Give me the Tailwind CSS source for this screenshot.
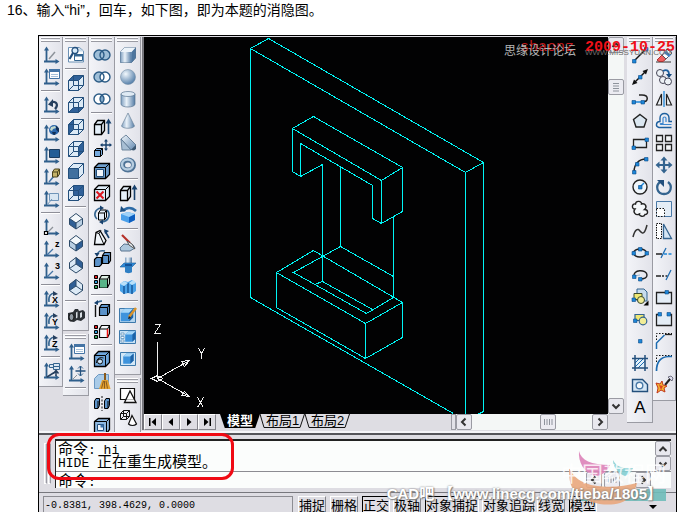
<!DOCTYPE html>
<html lang="zh-CN">
<head>
<meta charset="utf-8">
<meta name="viewport" content="width=device-width, initial-scale=1">
<title>CAD 消隐图</title>
<script src="https://cdn.jsdelivr.net/npm/@tailwindcss/browser@4"></script>
</head>
<body class="h-screen overflow-hidden bg-white font-['Liberation_Sans','Noto_Sans_CJK_SC',sans-serif] text-black">

<svg width="0" height="0" class="absolute" aria-hidden="true">
  <defs>
    <linearGradient id="gl" x1="0" x2="1" y1="0" y2="1"><stop offset="0" stop-color="#f4f9fd"/><stop offset="1" stop-color="#5f86ae"/></linearGradient>
    <linearGradient id="gh" x1="0" x2="1"><stop offset="0" stop-color="#7f9fc0"/><stop offset=".4" stop-color="#eaf2f9"/><stop offset="1" stop-color="#537ba5"/></linearGradient>
    <radialGradient id="gr" cx=".35" cy=".3" r=".75"><stop offset="0" stop-color="#f2f8fd"/><stop offset="1" stop-color="#4f7aa6"/></radialGradient>
    <g id="axes" fill="none" stroke="#2f5f8c" stroke-width="1.8"><path d="M5.5 4v12.5M3 16.500h13"/><path d="M5.500 1.500l-2.500 4h5zM18.500 16.500l-4-2.500v5z" fill="#2f5f8c" stroke="none"/></g>
    <g id="wire" fill="none" stroke="#234f7c" stroke-width="1"><path d="M2.500 7.500h10v10h-10zM7.500 2.500h10v10h-10zM2.500 7.500l5-5M12.500 7.500l5-5M2.500 17.500l5-5M12.500 17.500l5-5"/></g>
    <path id="hull" d="M2.500 7.500l5-5h10v10l-5 5h-10z" fill="#dceaf6"/>
    <g id="isow" fill="none" stroke="#2c4a68" stroke-width="1"><path d="M10 2.500l6.500 5v6L10 18l-6.500-4.500v-6zM3.500 7.500L10 12l6.500-4.500M10 12v6"/></g>
    <g id="bluebox"><path d="M4 7l4-4h9v9l-4 4H4z" fill="#3e93dc"/><path d="M4 7l4-4h9l-4 4z" fill="#a5d6f8"/><path d="M13 7l4-4v9l-4 4z" fill="#1d62a6"/></g>

    <symbol id="u1" viewBox="0 0 20 20"><use href="#axes"/><path d="M8 14l6-7" stroke="#8c9299" stroke-width="1.500"/></symbol>
    <symbol id="u2" viewBox="0 0 20 20"><use href="#axes"/><path d="M8.500 2.500h10v9h-10z" fill="#fff" stroke="#4474a5"/><path d="M8 2h11v3H8z" fill="#4474a5"/><path d="M10 7.500h7M10 9.500h7" stroke="#a7c1da"/></symbol>
    <symbol id="u3" viewBox="0 0 20 20"><use href="#axes"/><path d="M14 14c3.500-4 2-7.500-3-7" fill="none" stroke="#263f5e" stroke-width="2.200"/><path d="M7 9.500l5-5.500v8z" fill="#263f5e"/></symbol>
    <symbol id="u4" viewBox="0 0 20 20"><use href="#axes"/><circle cx="13" cy="7" r="5" fill="#2b66ab"/><path d="M10 4l4-1 1 2-3 1-1 2-2-1z" fill="#c3d9cb"/><path d="M15 2.500l3 3v4l-3-3zM11 9l4 0-1 3-2-.5z" fill="#122f55"/></symbol>
    <symbol id="u5" viewBox="0 0 20 20"><use href="#axes"/><path d="M8.500 4.500h10v8h-10z" fill="#235d96" stroke="#1a3c60"/></symbol>
    <symbol id="u6" viewBox="0 0 20 20"><use href="#axes"/><path d="M8 15l5-6" stroke="#4474a5" stroke-width="1.500"/><path d="M11.500 5l2-3h5v5l-2 3h-5z" fill="#c4b268" stroke="#4b431d"/><path d="M11.500 5h5v5M16.500 5l2-3" fill="none" stroke="#4b431d"/></symbol>
    <symbol id="u7" viewBox="0 0 20 20"><use href="#axes"/><path d="M8.500 4.500h9v7h-9z" fill="#d9e6f2" stroke="#6f94b8"/><path d="M6 16l5-6" stroke="#6f94b8"/></symbol>
    <symbol id="u8" viewBox="0 0 20 20"><use href="#axes"/><path d="M6 16l6-6" stroke="#8c9299" stroke-width="1.300"/><path d="M3.500 14.500h3v3h-3z" fill="#fff" stroke="#000" stroke-width="1.200"/></symbol>
    <symbol id="u9" viewBox="0 0 20 20"><use href="#axes"/><path d="M6 16l6-6" stroke="#4474a5" stroke-width="1.300"/><text x="14" y="8" font-family="Liberation Sans" font-weight="700" font-size="9">z</text></symbol>
    <symbol id="u10" viewBox="0 0 20 20"><use href="#axes"/><path d="M6 16l6-6" stroke="#4474a5" stroke-width="1.300"/><text x="14" y="8" font-family="Liberation Sans" font-weight="700" font-size="9">3</text></symbol>
    <symbol id="u11" viewBox="0 0 20 20"><use href="#axes"/><path d="M8 13c-1-6 2-9 6-9" fill="none" stroke="#34648f" stroke-width="1.500"/><path d="M17 5l-5-3v5z" fill="#263f5e"/><text x="11" y="14" font-family="Liberation Sans" font-weight="700" font-size="9">X</text></symbol>
    <symbol id="u12" viewBox="0 0 20 20"><use href="#axes"/><path d="M8 13c-1-6 2-9 6-9" fill="none" stroke="#34648f" stroke-width="1.500"/><path d="M17 5l-5-3v5z" fill="#263f5e"/><text x="11" y="14" font-family="Liberation Sans" font-weight="700" font-size="9">Y</text></symbol>
    <symbol id="u13" viewBox="0 0 20 20"><use href="#axes"/><path d="M8 13c-1-6 2-9 6-9" fill="none" stroke="#34648f" stroke-width="1.500"/><path d="M17 5l-5-3v5z" fill="#263f5e"/><text x="11" y="14" font-family="Liberation Sans" font-weight="700" font-size="9">Z</text></symbol>
    <symbol id="u14" viewBox="0 0 20 20"><use href="#axes"/><path d="M8.500 3.500h4v3h-4zM12.500 2.500h6v3h-6zM12.500 5.500h6v3h-6z" fill="#d9e6f2" stroke="#34648f"/><path d="M6 16l8-5M15 15v-5M12.500 12.500l2.500-3 2.500 3" fill="none" stroke="#263f5e" stroke-width="1.500"/></symbol>

    <symbol id="v1" viewBox="0 0 20 20"><path d="M2.500 2.500h11l4 3.500v11h-15z" fill="#fff" stroke="#6b91b5"/><path d="M13 2.500v4h4.500z" fill="#c9dcec"/><circle cx="9" cy="5.500" r="3" fill="#d9ecfa" stroke="#234f7c" stroke-width="1.300"/><path d="M7 8L3.500 14" stroke="#234f7c" stroke-width="2.200"/><path d="M8.500 9.500h8v6h-8z" fill="#fff" stroke="#34648f"/><path d="M8 9h9v2.500H8z" fill="#34648f"/></symbol>
    <symbol id="v2" viewBox="0 0 20 20"><use href="#hull"/><path d="M2.500 7.500l5-5h10l-5 5z" fill="#2f6099"/><use href="#wire"/></symbol>
    <symbol id="v3" viewBox="0 0 20 20"><use href="#hull"/><path d="M2.500 17.500l5-5h10l-5 5z" fill="#2f6099"/><use href="#wire"/></symbol>
    <symbol id="v4" viewBox="0 0 20 20"><use href="#hull"/><path d="M2.500 7.500l5-5v10l-5 5z" fill="#2f6099"/><use href="#wire"/></symbol>
    <symbol id="v5" viewBox="0 0 20 20"><use href="#hull"/><path d="M12.500 7.500l5-5v10l-5 5z" fill="#2f6099"/><use href="#wire"/></symbol>
    <symbol id="v6" viewBox="0 0 20 20"><use href="#hull"/><path d="M2.500 7.500h10v10h-10z" fill="#41709f"/><path d="M2.500 7.500l5-5h10v10l-5 5v-10zM2.500 7.500v10h10M12.500 7.500l5-5" fill="none" stroke="#234f7c"/></symbol>
    <symbol id="v7" viewBox="0 0 20 20"><use href="#hull"/><path d="M7.500 2.500h10v10h-10z" fill="#2f6099"/><use href="#wire"/></symbol>
    <symbol id="v8" viewBox="0 0 20 20"><path d="M10 2.500l6.500 5v6L10 18l-6.500-4.500v-6z" fill="#f4f8fb"/><path d="M3.500 7.500L10 12v6l-6.500-4.500z" fill="#2f5f96"/><path d="M16.500 7.500L10 12v6l6.500-4.500z" fill="#b9cfe3"/><use href="#isow"/></symbol>
    <symbol id="v9" viewBox="0 0 20 20"><path d="M10 2.500l6.500 5v6L10 18l-6.500-4.500v-6z" fill="#f4f8fb"/><path d="M3.500 7.500L10 12v6l-6.500-4.500z" fill="#b9cfe3"/><path d="M16.500 7.500L10 12v6l6.500-4.500z" fill="#2f5f96"/><use href="#isow"/></symbol>
    <symbol id="v10" viewBox="0 0 20 20"><path d="M10 2.500l6.500 5v6L10 18l-6.500-4.500v-6z" fill="#dceaf6"/><path d="M10 2.500l6.500 5v6L10 9z" fill="#2f5f96"/><path d="M10 2.500l6.500 5v6L10 18l-6.500-4.500v-6zM10 2.500V9M3.500 13.500L10 9l6.500 4.500" fill="none" stroke="#2c4a68"/></symbol>
    <symbol id="v11" viewBox="0 0 20 20"><path d="M10 2.500l6.500 5v6L10 18l-6.500-4.500v-6z" fill="#dceaf6"/><path d="M10 2.500l-6.500 5v6L10 9z" fill="#2f5f96"/><path d="M10 2.500l6.500 5v6L10 18l-6.500-4.500v-6zM10 2.500V9M3.500 13.500L10 9l6.500 4.500" fill="none" stroke="#2c4a68"/></symbol>
    <symbol id="v12" viewBox="0 0 20 20"><path d="M2 8l5-1 2-3h3l1 2 4-1 2 2v6l-4 3-4-1-3 2-4-.5-2-2z" fill="#2c3136"/><ellipse cx="5.500" cy="12" rx="2.500" ry="3.500" fill="#8f99a2" stroke="#111"/><path d="M10 7.500l1.500-1v6l-1.500 1zM14 8l2-1v5l-2 1z" fill="#d7dde2"/></symbol>
    <symbol id="v13" viewBox="0 0 20 20"><use href="#axes"/><path d="M14.500 2v10M9.500 7h10" fill="none" stroke="#234f7c" stroke-width="1.300"/><path d="M12 4.500L14.500 2 17 4.500M12 9.500l2.500 2.500L17 9.500" fill="none" stroke="#34648f"/><path d="M6 16l5-5" stroke="#8c9299"/></symbol>

    <symbol id="s1" viewBox="0 0 20 20"><circle cx="7" cy="10" r="5" fill="#9fbfd8"/><circle cx="13" cy="10" r="5" fill="#9fbfd8"/><g fill="none" stroke="#2c5c86" stroke-width="1.400"><circle cx="7" cy="10" r="5"/><circle cx="13" cy="10" r="5"/></g></symbol>
    <symbol id="s2" viewBox="0 0 20 20"><circle cx="7" cy="10" r="5" fill="#9fbfd8"/><circle cx="13" cy="10" r="5" fill="#fff"/><g fill="none" stroke="#2c5c86" stroke-width="1.400"><circle cx="7" cy="10" r="5"/><circle cx="13" cy="10" r="5"/></g></symbol>
    <symbol id="s3" viewBox="0 0 20 20"><circle cx="7" cy="10" r="5" fill="#fff"/><circle cx="13" cy="10" r="5" fill="#fff"/><path d="M10 6a5 5 0 010 8 5 5 0 010-8z" fill="#7fa7c8"/><g fill="none" stroke="#2c5c86" stroke-width="1.400"><circle cx="7" cy="10" r="5"/><circle cx="13" cy="10" r="5"/></g></symbol>
    <symbol id="s4" viewBox="0 0 20 20"><path d="M2.500 7.500l3-4h7v10l-3 4h-7z" fill="#e4eff9" stroke="#000" stroke-width="1.300"/><path d="M2.500 7.500h7l3-4M9.500 7.500v10" fill="none" stroke="#000" stroke-width="1.300"/><path d="M16.500 17V5" stroke="#17406c" stroke-width="1.600"/><path d="M16.500 1.500L13.500 6.500h6z" fill="#17406c"/></symbol>
    <symbol id="s5" viewBox="0 0 20 20"><path d="M2.500 11.500l2-2h6v6l-2 2h-6z" fill="#76a9dc" stroke="#000"/><path d="M2.500 11.500h6v6M8.500 11.500l2-2" fill="none" stroke="#000"/><path d="M14 1.500v9M9.500 6h9" stroke="#17406c" stroke-width="1.400"/><path d="M14 0l-2 2.500h4zM14 12l-2-2.500h4zM8 6l2.500-2v4zM20 6l-2.500-2v4z" fill="#17406c"/></symbol>
    <symbol id="s6" viewBox="0 0 20 20"><path d="M2.500 6.500l4-4h11v11l-4 4h-11z" fill="#6f9fce" stroke="#000" stroke-width="1.300"/><path d="M4.500 8.500h7v7h-7z" fill="#f1f6fb" stroke="#234f7c"/><path d="M13.500 6.500l4-4M13.500 6.500v11M2.500 6.500h11" fill="none" stroke="#000"/></symbol>
    <symbol id="s7" viewBox="0 0 20 20"><path d="M2.500 6.500l4-4h11v11l-4 4h-11z" fill="#dcebf7" stroke="#000" stroke-width="1.300"/><path d="M13.500 6.500l4-4M13.500 6.500v11M2.500 6.500h11" fill="none" stroke="#000"/><path d="M4.500 8.500l7 7M11.500 8.500l-7 7" stroke="#dd1720" stroke-width="2"/></symbol>
    <symbol id="s8" viewBox="0 0 20 20"><path d="M6.500 8l2-3h6v7l-2 3h-6z" fill="#e4eff9" stroke="#000"/><path d="M6.500 8h6v7M12.500 8l2-3" fill="none" stroke="#000"/><path d="M5 14c-4-4-2-10 4-11M15 5c4 4 2 11-5 12" fill="none" stroke="#34648f" stroke-width="1.700"/><path d="M12 3L8 .5v5zM7 17l4-2.500v5z" fill="#17406c"/></symbol>
    <symbol id="s9" viewBox="0 0 20 20"><path d="M2.500 17.500L4 5.500l4-2 6 10-2 4z" fill="#f1f6fb" stroke="#000" stroke-width="1.300"/><path d="M4 5.500l3 1 5 11M7 6.500l2-3" fill="none" stroke="#000"/><path d="M17 11l-4-7" stroke="#17406c" stroke-width="1.600"/><path d="M12 2l5 2-4 3z" fill="#17406c"/></symbol>
    <symbol id="s10" viewBox="0 0 20 20"><path d="M2.500 10.500l2-2h5v7l-2 2h-5z" fill="#5c93ca" stroke="#000" stroke-width="1.200"/><path d="M10.500 6.500l2-3h6v8l-2 3h-6z" fill="#5c93ca" stroke="#000" stroke-width="1.200"/><path d="M10.500 6.500h6v8" fill="none" stroke="#000"/><path d="M5 6c1-4 4-5 8-4" fill="none" stroke="#34648f" stroke-width="1.500"/><path d="M2.500 4h5L5 8z" fill="#17406c"/></symbol>
    <symbol id="s11" viewBox="0 0 20 20"><path d="M7.500 8l2-3.500h8v8l-2 4h-8z" fill="#dff1e6" stroke="#000" stroke-width="1.200"/><path d="M8 8.500h7v8H8z" fill="#58b488"/><path d="M7.500 8h8v8M15.500 8l2-3.500" fill="none" stroke="#000"/><path d="M2.500 4.500h3v3h-3z" fill="#d22" stroke="#000"/><path d="M2.500 9.500h3v3h-3z" fill="#2a9ad6" stroke="#000"/><path d="M2.500 14.500h3v3h-3z" fill="#3aa35a" stroke="#000"/></symbol>
    <symbol id="s12" viewBox="0 0 20 20"><path d="M7.500 8.500l2-3h8v8l-2 3h-8z" fill="#5c93ca" stroke="#000" stroke-width="1.200"/><path d="M7.500 8.500h8v8M15.500 8.500l2-3" fill="none" stroke="#000"/><path d="M3.500 6v12" stroke="#111" stroke-width="1.400"/><path d="M4 5c2-3 4-3 6-3" fill="none" stroke="#34648f" stroke-width="1.500"/><path d="M2 4l4-3v5z" fill="#17406c"/></symbol>
    <symbol id="s13" viewBox="0 0 20 20"><path d="M7.500 8l2-3.500h8v8l-2 4h-8z" fill="#f6f9fc" stroke="#000" stroke-width="1.200"/><path d="M7.500 8h8M15.500 8l2-3.500" fill="none" stroke="#000"/><path d="M15.500 8v8.500" stroke="#e11" stroke-width="1.500"/><path d="M2.500 4.500h3v3h-3z" fill="#d22" stroke="#000"/><path d="M2.500 9.500h3v3h-3z" fill="#2a9ad6" stroke="#000"/><path d="M2.500 14.500h3v3h-3z" fill="#3aa35a" stroke="#000"/></symbol>
    <symbol id="s14" viewBox="0 0 20 20"><path d="M2.500 6.500l4-4h11v11l-4 4h-11z" fill="#6ea5d9" stroke="#000" stroke-width="1.300"/><path d="M13.500 6.500l4-4M13.500 6.500v11M2.500 6.500h11" fill="none" stroke="#000"/><circle cx="8" cy="12.500" r="2.500" fill="#c8e0f4" stroke="#111"/><path d="M4.500 14c0-5 4-6 7-5" fill="none" stroke="#111"/></symbol>
    <symbol id="s15" viewBox="0 0 20 20"><path d="M2.500 7.500l4-4h10v9l-4 5h-10z" fill="#a9cbe8" stroke="#6c98c2"/><path d="M12 2h2v7h-2z" fill="#8a5a1c"/><path d="M10 9h6l2.500 9H7z" fill="#e2a132"/><path d="M9.500 17.500L11.500 10M12.500 17.500V10M15.500 17.500L14 10" stroke="#8a5a1c"/></symbol>
    <symbol id="s16" viewBox="0 0 20 20"><path d="M2.500 8l1.500-2.500h3.500v7L6 15.500H2.500zM12.500 8L14 5.500h3.500v7L16 15.500h-3.500z" fill="#5c93ca" stroke="#000"/><path d="M6 8v7M16 8v7" stroke="#000"/><path d="M10 3v15" stroke="#111" stroke-dasharray="2 1.500"/></symbol>
    <symbol id="s17" viewBox="0 0 20 20"><path d="M2.500 6.500l4-3h11v11l-3 4h-12z" fill="#8fb9e0" stroke="#000" stroke-width="1.300"/><path d="M2.500 6.500h12v12M14.500 6.500l3-3" fill="none" stroke="#000"/><path d="M5.500 9.500h6v6h-6z" fill="#eef5fb" stroke="#234f7c"/><path d="M8.500 9.500h3v3h-3z" fill="#3c72a8"/></symbol>

    <symbol id="d1" viewBox="0 0 20 20"><path d="M2.500 7l4-4.500h11V13l-4 4.500h-11z" fill="url(#gl)" stroke="#5a7590"/><path d="M13.500 7l4-4.500V13l-4 4.500z" fill="#4d769f"/><path d="M2.500 7h11v10.500h-11z" fill="url(#gh)"/><path d="M2.500 7l4-4.500h11L13.500 7z" fill="#edf4fa"/></symbol>
    <symbol id="d2" viewBox="0 0 20 20"><circle cx="10" cy="10" r="7.500" fill="url(#gr)" stroke="#7790a8" stroke-width=".6"/></symbol>
    <symbol id="d3" viewBox="0 0 20 20"><path d="M3 5v10c0 4 14 4 14 0V5z" fill="url(#gh)" stroke="#5a7590" stroke-width=".7"/><ellipse cx="10" cy="5" rx="7" ry="2.500" fill="#dfeaf4" stroke="#5a7590" stroke-width=".7"/></symbol>
    <symbol id="d4" viewBox="0 0 20 20"><path d="M10 2l6.500 13c-1 3-12 3-13 0z" fill="url(#gh)" stroke="#6a8299" stroke-width=".7"/></symbol>
    <symbol id="d5" viewBox="0 0 20 20"><path d="M3 6l5-4 10 10-5 5z" fill="url(#gl)" stroke="#56718c" stroke-width=".8"/><path d="M3 6l10 11H4z" fill="#a8bfd4" stroke="#56718c" stroke-width=".8"/><path d="M13 17l5-5v4l-2 1.500z" fill="#3c5873"/></symbol>
    <symbol id="d6" viewBox="0 0 20 20"><ellipse cx="10" cy="10" rx="5.500" ry="5" fill="none" stroke="#4f7396" stroke-width="5"/><ellipse cx="9.500" cy="9.500" rx="5.500" ry="5" fill="none" stroke="#b7cde0" stroke-width="2.500"/></symbol>
    <symbol id="d7" viewBox="0 0 20 20"><path d="M3 9l7-2 7 2v6l-6 3-8-3z" fill="#4ba0ea"/><path d="M11 12l6-3v6l-6 3z" fill="#0f5fc0"/><path d="M3 9l7-2 7 2-6 3z" fill="#9fd2f9"/><path d="M5 6c3-4 9-4 13 0" fill="none" stroke="#2d6ba6" stroke-width="2.500"/><path d="M2 7l1-6 5 5z" fill="#1b4d80"/></symbol>
    <symbol id="d8" viewBox="0 0 20 20"><path d="M2 15l4-4 9 1 2 3-5 3H3z" fill="#aec8dd" stroke="#5a7590"/><path d="M4 2l8 8" stroke="#b5302a" stroke-width="2.200"/><path d="M9 8l5 3 3 5-6-4z" fill="#e9eef2" stroke="#555"/></symbol>
    <symbol id="d9" viewBox="0 0 20 20"><path d="M7 2.500h7v6H7z" fill="url(#gh)"/><path d="M2 12l4-4h12l-4 4z" fill="#2f8ad8" stroke="#1c5a94" stroke-width=".6"/><path d="M7 12h7v5c-1 1.500-6 1.500-7 0z" fill="#2f7fc4"/><path d="M7 9h7v2H7z" fill="#155297"/></symbol>
    <symbol id="d10" viewBox="0 0 20 20"><path d="M2 7l4-3 4 1 4-2 4 3v8l-4 3-4-1-4 1-4-3z" fill="#4aa2e8"/><path d="M6 9v8M10 6v10M14 8v9" stroke="#17599c" stroke-width="1.500"/><path d="M2 7l4-3 4 2-4 3zM11 6l4-3 3 3-4 2z" fill="#b9e0fa"/></symbol>
    <symbol id="d11" viewBox="0 0 20 20"><path d="M1.500 3.500h16v14h-16z" fill="#b5d5ee" stroke="#3d79ab"/><g transform="translate(-1 1) scale(.95)"><use href="#bluebox"/></g><path d="M18 3l-7 9" stroke="#d9932b" stroke-width="2.500"/><path d="M11 11l-1 3 3-1z" fill="#222"/></symbol>
    <symbol id="d12" viewBox="0 0 20 20"><path d="M1.500 3.500h16v13h-16z" fill="#c9e2f5" stroke="#3d79ab"/><path d="M3 6h3v2H3zM3 9.500h3v2H3zM3 13h3v2H3z" fill="#fff" stroke="#3d79ab" stroke-width=".6"/><g transform="translate(4 2) scale(.8)"><use href="#bluebox"/></g></symbol>
    <symbol id="d13" viewBox="0 0 20 20"><path d="M2.500 3.500h15v13h-15z" fill="#d3e7f6" stroke="#3d79ab"/><g transform="translate(2 2) scale(.8)"><use href="#bluebox"/></g></symbol>
    <symbol id="d14" viewBox="0 0 20 20"><path d="M2.500 2.500h14v11h-14z" fill="#fff" stroke="#111" stroke-width="1.200"/><path d="M6.500 16.500L12 5l6 11.500z" fill="#fff" fill-opacity=".7" stroke="#111" stroke-width="1.300"/></symbol>
    <symbol id="d15" viewBox="0 0 20 20"><path d="M2.500 5.500l3-3h6v6l-3 3h-6zM2.500 5.500h6v6M8.500 5.500l3-3M5.500 2.500v6h6M2.500 11.500l3-3" fill="none" stroke="#111"/><path d="M14 7.500l4.500 8.500c-2 2-6 2-8 0z" fill="#fff" stroke="#111" stroke-width="1.200"/></symbol>

    <g id="dot"><path d="M-1.500-1.500h3.500v3.500h-3.500z" fill="#1d86d8" stroke="#0c4a86" stroke-width=".6"/></g>
    <symbol id="l1" viewBox="0 0 20 20"><path d="M4 16L16 4" stroke="#111" stroke-width="1.500"/><use href="#dot" x="4" y="16"/><use href="#dot" x="16" y="4"/></symbol>
    <symbol id="l2" viewBox="0 0 20 20"><path d="M3.500 16.500l13-13" stroke="#111" stroke-width="1.400"/><path d="M2 18l2-5.500L7.500 16zM18 2l-2 5.500L12.500 4z" fill="#111"/><use href="#dot" x="10" y="10"/></symbol>
    <symbol id="l3" viewBox="0 0 20 20"><path d="M3 13h9" stroke="#1d86d8" stroke-width="1.500"/><path d="M12 13c7 0 7-7 0-7H9" fill="none" stroke="#222" stroke-width="1.500"/><use href="#dot" x="3.500" y="13"/><use href="#dot" x="12.500" y="13"/></symbol>
    <symbol id="l4" viewBox="0 0 20 20"><path d="M10 3.500l6.500 5-2.500 7.500H6L3.500 8.500z" fill="#dbe7f1" stroke="#222" stroke-width="1.400"/></symbol>
    <symbol id="l5" viewBox="0 0 20 20"><path d="M3.500 6.500h13v8h-13z" fill="#e4edf6" stroke="#222" stroke-width="1.300"/><use href="#dot" x="3.500" y="14.500"/><use href="#dot" x="16.500" y="6.500"/></symbol>
    <symbol id="l6" viewBox="0 0 20 20"><path d="M4 17C4 9 9 4 16 4" fill="none" stroke="#222" stroke-width="1.500"/><use href="#dot" x="4" y="17"/><use href="#dot" x="7" y="9"/><use href="#dot" x="16" y="4"/></symbol>
    <symbol id="l7" viewBox="0 0 20 20"><circle cx="10" cy="10" r="7" fill="#eff5fa" stroke="#222" stroke-width="1.400"/><path d="M10 10l4-4" stroke="#1d86d8" stroke-width="1.500"/><use href="#dot" x="10" y="10"/></symbol>
    <symbol id="l8" viewBox="0 0 20 20"><path d="M5 10C1 10 2 4 5.500 5 6 1 12 2 11.500 5c4-1 6 3 3 5.500 4 0 4 5 .5 5-1 3-6 2-5.500-.5-4 2-7-2-4.500-5z" fill="#f4f7fa" stroke="#222" stroke-width="1.400"/></symbol>
    <symbol id="l9" viewBox="0 0 20 20"><path d="M3 16C5 8 8 7 10 10c3 4 5 2 7-6" fill="none" stroke="#333" stroke-width="1.500"/></symbol>
    <symbol id="l10" viewBox="0 0 20 20"><ellipse cx="10" cy="10" rx="6.500" ry="4" fill="#e4edf6" stroke="#222" stroke-width="1.400"/><use href="#dot" x="3.500" y="10"/><use href="#dot" x="16.500" y="10"/><use href="#dot" x="10" y="6"/></symbol>
    <symbol id="l11" viewBox="0 0 20 20"><path d="M4 12c-2-8 13-8 13-2 0 3-3 4-7 4" fill="none" stroke="#222" stroke-width="1.400"/><path d="M4 11l6-1" stroke="#9cb9d4"/><use href="#dot" x="4" y="11.500"/><use href="#dot" x="10" y="14"/></symbol>
    <symbol id="l12" viewBox="0 0 20 20"><path d="M7 2h7l3 3v9H7z" fill="#c7dcee" stroke="#34648f"/><path d="M4 6.500h8v6H4z" fill="#efe873" stroke="#3d4b2c"/><circle cx="11" cy="13" r="3.500" fill="#f1ed97" stroke="#3d4b2c"/><use href="#dot" x="3.500" y="12.500"/><path d="M18.500 13.500v5h-5z" fill="#000"/></symbol>
    <symbol id="l13" viewBox="0 0 20 20"><path d="M5 5.500h9v6H5z" fill="#efe873" stroke="#34648f" stroke-width="1.200"/><circle cx="13" cy="12" r="3.800" fill="#f1ed97" stroke="#34648f" stroke-width="1.200"/><use href="#dot" x="5" y="11.500"/></symbol>
    <symbol id="l14" viewBox="0 0 20 20"><use href="#dot" x="10" y="10"/></symbol>
    <symbol id="l15" viewBox="0 0 20 20"><path d="M5.500 5.500h9v9h-9z" fill="#e4f1fa"/><path d="M5 10l5-5M5 14l9-9M8 15l7-7" stroke="#1d6bb0"/><path d="M5 2v16M15 2v16M2 5.500h16M2 15h16" stroke="#234f7c" stroke-width="1.500"/></symbol>
    <symbol id="l16" viewBox="0 0 20 20"><path d="M2.500 4.500h10l5 5v7h-15z" fill="#d5e6f5" stroke="#234f7c" stroke-width="1.400"/><circle cx="9.500" cy="10.500" r="3.300" fill="#f5f9fc" stroke="#4a7aa8" stroke-width="1.400"/></symbol>
    <symbol id="l17" viewBox="0 0 20 20"><text x="10" y="16" text-anchor="middle" font-family="Liberation Sans" font-size="17">A</text></symbol>

    <symbol id="m1" viewBox="0 0 20 20"><path d="M2 17h15" stroke="#333"/><path d="M8 10l4 4-3 2.500H5L3 15z" fill="#ef5f5f" stroke="#a33"/><path d="M8 10l5-6 5 4-6 6z" fill="#fff" stroke="#556"/><path d="M10 8l5 4 2-2-5-4z" fill="#3c86cf"/></symbol>
    <symbol id="m2" viewBox="0 0 20 20"><circle cx="6" cy="6" r="3.500" fill="#edf2f6" stroke="#445"/><circle cx="9" cy="13" r="3.500" fill="#edf2f6" stroke="#445"/><circle cx="14" cy="14.500" r="3.500" fill="#edf2f6" stroke="#445"/><path d="M9 4c4-2 6 0 6 3" fill="none" stroke="#1d5f9e" stroke-width="1.800"/><path d="M12 7h6l-3 4z" fill="#174a7e"/></symbol>
    <symbol id="m3" viewBox="0 0 20 20"><path d="M10 2v16" stroke="#1d86d8" stroke-width="1.300"/><path d="M7.500 5v11H2.500zM12.500 5v11h5z" fill="#eef2f5" stroke="#222" stroke-width="1.200"/></symbol>
    <symbol id="m4" viewBox="0 0 20 20"><path d="M17.500 16.500H5c-4-1-3-6 1-6V7c0-6 9-6 9 0v3.500h3" fill="none" stroke="#1d5f9e" stroke-width="1.400"/><path d="M17.500 13.500H7c-1 0-1-1 0-1h2V7.500c0-2 3-2 3 0v3.500" fill="none" stroke="#3c86cf" stroke-width="1.200"/></symbol>
    <symbol id="m5" viewBox="0 0 20 20"><path d="M2.500 2.500h6v6h-6zM11.500 2.500h6v6h-6zM2.500 11.500h6v6h-6zM11.500 11.500h6v6h-6z" fill="#f4f6f8" stroke="#222" stroke-width="1.300"/></symbol>
    <symbol id="m6" viewBox="0 0 20 20"><path d="M10 4v12M4 10h12" stroke="#34648f" stroke-width="2.200"/><path d="M10 1.500L6.500 5.500h7zM10 18.500l-3.500-4h7zM1.500 10l4-3.500v7zM18.500 10l-4-3.500v7z" fill="#34648f"/></symbol>
    <symbol id="m7" viewBox="0 0 20 20"><path d="M6 5c-5 4-3 12 4 12s9-8 4-12" fill="none" stroke="#34648f" stroke-width="2.300"/><path d="M3 3h7v7z" fill="#234f7c"/></symbol>
    <symbol id="m8" viewBox="0 0 20 20"><path d="M2.500 2.500h15v15h-15z" fill="#e4edf6" stroke="#4a7aa8"/><path d="M2.500 9.500h8v8h-8z" fill="#fff" stroke="#111" stroke-dasharray="1.500 1.500"/></symbol>
    <symbol id="m9" viewBox="0 0 20 20"><path d="M2.500 2.500h5v15h-5z" fill="#fff" stroke="#111" stroke-dasharray="1.500 1"/><path d="M9.500 3l8 14.500h-8z" fill="#d5e6f5" stroke="#34648f" stroke-width="1.300"/></symbol>
    <symbol id="m10" viewBox="0 0 20 20"><path d="M2 11h6" stroke="#222" stroke-width="1.500"/><path d="M10 11h8" stroke="#1d86d8" stroke-dasharray="3 1.500" stroke-width="1.300"/><path d="M7 15l5-10" stroke="#1d6bb0" stroke-width="1.300"/></symbol>
    <symbol id="m11" viewBox="0 0 20 20"><path d="M2 11h5" stroke="#222" stroke-width="1.500"/><path d="M8 11h6" stroke="#222" stroke-dasharray="2 1.500" stroke-width="1.300"/><path d="M12 15l5-10" stroke="#1d6bb0" stroke-width="1.300"/></symbol>
    <symbol id="m12" viewBox="0 0 20 20"><path d="M2.500 5.500h15v11h-15z" fill="#e4edf6" stroke="#222" stroke-width="1.300"/><use href="#dot" x="12.500" y="5"/></symbol>
    <symbol id="m13" viewBox="0 0 20 20"><path d="M5 5.500H2.500v11h15v-11H15" fill="#e4edf6" stroke="#222" stroke-width="1.300"/><use href="#dot" x="5.500" y="5"/><use href="#dot" x="14.500" y="5"/></symbol>
    <symbol id="m14" viewBox="0 0 20 20"><path d="M2.500 9V2.500H18" fill="none" stroke="#111" stroke-dasharray="1.500 1.500"/><path d="M2.500 18v-6l8-8" fill="none" stroke="#1d6bb0" stroke-width="1.500"/><path d="M11 3.500h7" stroke="#222" stroke-width="1.300"/></symbol>
    <symbol id="m15" viewBox="0 0 20 20"><path d="M2.500 9V2.500H18" fill="none" stroke="#111" stroke-dasharray="1.500 1.500"/><path d="M2.500 18c0-9 4-14 12-14.500H18" fill="none" stroke="#1d6bb0" stroke-width="1.700"/></symbol>
    <symbol id="m16" viewBox="0 0 20 20"><path d="M11 10l5-6" stroke="#222" stroke-width="2"/><path d="M14 2l3-1 2 2-1 3-2-2z" fill="#dde" stroke="#445" stroke-width=".7"/><path d="M2 8l4 1 2-3 1 4 4 1-3 2 1 4-4-2-4 3 1-5z" fill="#f2b233" stroke="#c2371c"/><path d="M5 10l4 1-2 4z" fill="#d42"/></symbol>

    <symbol id="up" viewBox="0 0 14 14"><path d="M3.500 9L7 5.500 10.500 9" fill="none" stroke="#333" stroke-width="2"/></symbol>
    <symbol id="down" viewBox="0 0 14 14"><path d="M3.500 5.500L7 9l3.500-3.500" fill="none" stroke="#333" stroke-width="2"/></symbol>
    <symbol id="left" viewBox="0 0 14 14"><path d="M8.500 3.500L5 7l3.500 3.500" fill="none" stroke="#333" stroke-width="2"/></symbol>
    <symbol id="right" viewBox="0 0 14 14"><path d="M5.500 3.500L9 7l-3.500 3.500" fill="none" stroke="#333" stroke-width="2"/></symbol>
    <symbol id="grab" viewBox="0 0 14 14"><path d="M3.500 4v6M6 4v6M8.500 4v6M11 4v6" stroke="#8e939c"/></symbol>
  </defs>
</svg>

<p class="h-[35px] pl-[7px] pt-px text-[14px] leading-[18px]">16、输入“hi”，回车，如下图，即为本题的消隐图。</p>

<main class="relative ml-[38px] mr-[9px] border border-b-0 border-black bg-[#dedde3]">
  <div class="flex max-h-[396px] items-start overflow-hidden pt-px">
    <div class="flex w-6 flex-col" data-col="left1"></div>
    <div class="flex w-[26px] flex-col" data-col="left2"></div>
    <div class="flex w-[26px] flex-col" data-col="left3"></div>
    <div class="flex w-[26px] flex-col" data-col="left4"></div>

    <section class="ml-px flex min-w-0 flex-1 flex-col border-l-2 border-[#77777d]">
      <div class="flex">
        <div class="min-w-0 flex-1 overflow-hidden bg-[#020203]">
          <svg class="block h-[377px] w-[464px]" viewBox="144 37 464 377" role="img" aria-label="消隐后的三维模型">
            <g fill="none" stroke="#00f4f4" stroke-width="1" shape-rendering="crispEdges" transform="translate(.5 .5)">
              <path d="M453 413L250 297V48l18-10 215 124-18 10L250 48M465 172v242M483 162v249l-6 3"/>
              <path d="M292 128l21-12 89 51-21 13zM292 128v43l8 5v-33l72 42v33l9 5 21-12v-44M381 180v43M300 176l22-12v117M340 166v80M393 216v81"/>
              <path d="M393 276l-53-30-47 26 73 41 27-16M276 272l37-22 89 52-37 21zM276 272v35l89 51 37-21v-35M365 323v35M314 284l8-3 50 28"/>
            </g>
            <g fill="none" stroke="#f0f0f0" stroke-width="1" transform="translate(.5 .5)">
              <path d="M157 341v37l32-18M157 378l32 18M151 378l6-3 5 3-5 3zM189 360l-8 1 3 5zM189 396l-8-1 3-4zM154 324h6l-6 9h6M198 348l3 5 3-5M201 353v5M197 397l6 10M203 397l-6 10" shape-rendering="crispEdges"/>
            </g>
          </svg>
        </div>
        <div class="flex w-4 flex-col bg-[#f4f7f6]">
          <button type="button" aria-label="向上滚动" class="size-4 rounded-xs border border-[#9a9ba3] bg-[#e8e8ee]"><svg class="size-3.5"><use href="#up"/></svg></button>
          <button type="button" aria-label="垂直滚动块" class="mt-[26px] size-4 rounded-xs border border-[#9a9ba3] bg-[#ececf2]"><svg class="size-3.5 rotate-90"><use href="#grab"/></svg></button>
          <button type="button" aria-label="向下滚动" class="mt-auto size-4 rounded-xs border border-[#9a9ba3] bg-[#e8e8ee]"><svg class="size-3.5"><use href="#down"/></svg></button>
        </div>
      </div>
      <div class="flex h-4 items-stretch">
        <div class="flex">
          <button type="button" aria-label="第一个布局" class="flex w-[18px] items-center justify-center border border-white border-r-[#85858c] border-b-[#85858c]"><svg class="size-3" viewBox="0 0 12 12"><path d="M2 2h1.500v8H2zM9 2v8L4.500 6z"/></svg></button>
          <button type="button" aria-label="上一个布局" class="flex w-[18px] items-center justify-center border border-white border-r-[#85858c] border-b-[#85858c]"><svg class="size-3" viewBox="0 0 12 12"><path d="M8 2v8L3.500 6z"/></svg></button>
          <button type="button" aria-label="下一个布局" class="flex w-[18px] items-center justify-center border border-white border-r-[#85858c] border-b-[#85858c]"><svg class="size-3" viewBox="0 0 12 12"><path d="M4 2v8l4.500-4z"/></svg></button>
          <button type="button" aria-label="最后一个布局" class="flex w-[18px] items-center justify-center border border-white border-r-[#85858c] border-b-[#85858c]"><svg class="size-3" viewBox="0 0 12 12"><path d="M8.500 2H10v8H8.500zM3 2v8l4.500-4z"/></svg></button>
        </div>
        <div class="ml-1 flex" role="tablist">
          <button type="button" role="tab" aria-selected="true" class="h-[14px] w-10 bg-black text-[13px] leading-[14px] font-bold text-white [clip-path:polygon(0_0,100%_0,88%_100%,12%_100%)]">模型</button>
          <button type="button" role="tab" class="relative h-[14px] w-[45px] text-[13px] leading-[14px]"><svg class="absolute inset-0 h-[14px] w-[45px]" viewBox="0 0 45 14" fill="none" stroke="#111"><path d="M0 0l4 13.500h36L44.500 0"/></svg>布局1</button>
          <button type="button" role="tab" class="relative h-[14px] w-[45px] text-[13px] leading-[14px]"><svg class="absolute inset-0 h-[14px] w-[45px]" viewBox="0 0 45 14" fill="none" stroke="#111"><path d="M0 0l4 13.500h36L44.500 0"/></svg>布局2</button>
        </div>
        <div class="ml-auto flex w-[157px] bg-[#f4f7f6]">
          <span class="w-[5px] border border-[#9a9ba3] bg-[#e2e2e8]"></span>
          <button type="button" aria-label="向左滚动" class="size-4 rounded-xs border border-[#9a9ba3] bg-[#e8e8ee]"><svg class="size-3.5"><use href="#left"/></svg></button>
          <button type="button" aria-label="水平滚动块" class="mr-auto ml-[68px] size-4 rounded-xs border border-[#9a9ba3] bg-[#ececf2]"><svg class="size-3.5"><use href="#grab"/></svg></button>
          <button type="button" aria-label="向右滚动" class="size-4 rounded-xs border border-[#9a9ba3] bg-[#e8e8ee]"><svg class="size-3.5"><use href="#right"/></svg></button>
        </div>
        <span class="w-4"></span>
      </div>
    </section>

    <div class="ml-[3px] flex w-[26px] flex-col" data-col="right1"></div>
    <div class="flex w-[23px] flex-col" data-col="right2"></div>
  </div>

  <section class="mt-px border-t-2 border-[#55555a] shadow-[0_-2px_0_#f5f5f8]">
    <div class="flex pt-1 pr-[5px] pb-1 pl-[5px]">
      <div class="mr-1 flex w-[7px] gap-px py-1"><span class="flex-1 border border-white border-r-[#9a9ba3]"></span><span class="flex-1 border border-white border-r-[#9a9ba3]"></span></div>
      <div class="min-w-0 flex-1 border-t-2 border-l border-[#222] bg-[#fbfdfc] font-['Liberation_Mono','Noto_Sans_CJK_SC',monospace]">
        <div class="flex border-b border-[#8c8c92]">
          <div class="flex-1 pt-[3px] pl-0.5 text-[15px]">
            <div class="h-[13px] leading-[13px]">命令<span class="text-[13px]">: hi</span></div>
            <div class="h-[14px] leading-[14px]"><span class="text-[13px]">HIDE </span>正在重生成模型。</div>
          </div>
          <div class="flex w-4 flex-col">
            <button type="button" aria-label="向上" class="flex h-[15px] items-center rounded-xs border border-[#9a9ba3] bg-[#e8e8ee]"><svg class="size-3.5 shrink-0"><use href="#up"/></svg></button>
            <button type="button" aria-label="向下" class="flex h-[15px] items-center rounded-xs border border-[#9a9ba3] bg-[#e8e8ee]"><svg class="size-3.5 shrink-0"><use href="#down"/></svg></button>
          </div>
        </div>
        <div class="flex h-4 pl-0.5">
          <label for="cmd" class="pt-0.5 text-[15px] leading-[17px]">命令<span class="text-[13px]">:</span></label>
          <input id="cmd" type="text" class="ml-2 h-4 min-w-0 flex-1 bg-transparent text-[13px] outline-none">
          <div class="mr-5 flex w-[65px] bg-[#f4f7f6]">
            <button type="button" aria-label="向左" class="size-4 rounded-xs border border-[#9a9ba3] bg-[#e8e8ee]"><svg class="size-3.5"><use href="#left"/></svg></button>
            <button type="button" aria-label="滚动块" class="ml-0.5 size-4 rounded-xs border border-[#9a9ba3] bg-[#ececf2]"><svg class="size-3.5"><use href="#grab"/></svg></button>
            <button type="button" aria-label="向右" class="ml-auto size-4 rounded-xs border border-[#9a9ba3] bg-[#e8e8ee]"><svg class="size-3.5"><use href="#right"/></svg></button>
          </div>
        </div>
      </div>
    </div>
  </section>

  <footer class="flex h-6 items-start border-t border-[#77777d] px-1 pt-[3px] text-[13px] leading-[18px] whitespace-nowrap">
    <output class="mr-[5px] h-5 w-[250px] border border-[#8c8c92] pl-px font-['Liberation_Mono',monospace] text-[10px]">-0.8381, 398.4629, 0.0000</output>
    <button type="button" class="mr-1 w-7 border border-white border-r-[#85858c]">捕捉</button>
    <button type="button" class="mr-1 w-7 border border-white border-r-[#85858c]">栅格</button>
    <button type="button" aria-pressed="true" class="mr-[3px] w-7 border border-white border-t-black border-l-black">正交</button>
    <button type="button" class="mr-1 w-7 border border-white border-r-[#85858c]">极轴</button>
    <button type="button" aria-pressed="true" class="mr-[3px] w-[54px] border border-white border-t-black border-l-black">对象捕捉</button>
    <button type="button" class="mr-[3px] w-[52px] border border-white border-r-[#85858c]">对象追踪</button>
    <button type="button" class="mr-1 w-7 border border-white border-r-[#85858c]">线宽</button>
    <button type="button" aria-pressed="true" class="w-7 border border-white border-t-black border-l-black">模型</button>
    <button type="button" aria-label="状态栏菜单" class="mt-2 mr-[14px] ml-auto"><svg class="h-1.5 w-2.5" viewBox="0 0 10 6"><path d="M1 1h8L5 5z"/></svg></button>
  </footer>

  <div class="absolute top-[397px] left-2 h-[47px] w-[187px] rounded-xl border-[3px] border-[#f00a14]"></div>

  <div class="pointer-events-none absolute top-1 right-px h-5 w-[171px]">
    <span class="absolute top-0 left-[16px] font-['Liberation_Mono',monospace] text-[15px] leading-[16px] text-[#c0181c]">shaonz</span>
    <span class="absolute top-0 right-0 font-['Liberation_Mono',monospace] text-[15px] leading-[16px] font-bold text-[#f01018]">2009-10-25</span>
    <span class="absolute top-1 left-0 text-[12px] leading-[14px] text-[#b4b4b4]">思缘设计论坛</span>
    <span class="absolute top-1.5 right-[3px] text-[8px] leading-[14px] text-[#6b6b6b]">WWW.MISSYUAN.COM</span>
  </div>

  <div class="pointer-events-none absolute right-[10px] bottom-[8px] h-[58px] w-[290px]">
    <svg class="absolute top-0 right-0 h-[56px] w-[111px]" viewBox="0 0 111 56" aria-hidden="true">
      <path d="M26 39h85v12H26z" fill="#6fbcb9" fill-opacity=".9"/>
      <path d="M14 18c5 10 12 14 22 17 15 3 32 2 46-2-2 10-8 17-17 20-14 4-32 0-42-8C15 38 14 30 14 18z" fill="#e9a67c" fill-opacity=".9"/>
      <path d="M24 1c2 9 12 14 31 14-2 6-8 11-15 11C29 23 23 12 24 1z" fill="#dc82b8" fill-opacity=".9"/>
      <path d="M58 10c4 8 12 9 20 8-2 5-4 7-8 8-6-2-12-8-12-16z" fill="#83cdd2" fill-opacity=".9"/>
    </svg>
    <span class="absolute top-3 right-0 text-[21px] leading-6 text-white/80">中国教程网</span>
    <span class="absolute right-1 bottom-1 text-[15px] leading-[20px] font-bold whitespace-nowrap text-white [text-shadow:0_0_2px_#777,1px_1px_1px_#888]">CAD吧 【www.linecg.com/tieba/1805】</span>
  </div>
</main>

<script>
// Toolbars: every string is one docked bar, "-" is a separator, the rest are icon:label.
const bars = {
  left1: ["u1:UCS u2:显示UCS - u3:上一个UCS - u4:世界UCS u5:对象UCS u6:面UCS u7:视图UCS - u8:原点UCS u9:Z轴UCS u10:三点UCS - u11:绕X旋转 u12:绕Y旋转 u13:绕Z旋转 - u14:应用UCS"],
  left2: ["v1:命名视图 - v2:俯视图 v3:仰视图 v4:左视图 v5:右视图 v6:主视图 v7:后视图 - v8:西南等轴测 v9:东南等轴测 v10:东北等轴测 v11:西北等轴测 - v12:相机", "u2:UCS对话框 v13:移动UCS -"],
  left3: ["s1:并集 s2:差集 s3:交集 - s4:拉伸面 s5:移动面 s6:偏移面 s7:删除面 s8:旋转面 s9:倾斜面 s10:复制面 s11:着色面 - s12:复制边 s13:着色边 - s14:压印 s15:清除 s16:分割 s17:抽壳"],
  left4: ["d1:长方体 d2:球体 d3:圆柱体 d4:圆锥体 d5:楔体 d6:圆环 - s4:拉伸 d7:旋转 - d8:剖切 d9:切割 d10:干涉 - d11:设置图形 d12:设置视图 d13:设置轮廓", "d14:二维线框 d15:三维线框"],
  right1: ["l1:直线 l2:构造线 l3:多段线 l4:正多边形 l5:矩形 l6:圆弧 l7:圆 l8:修订云线 l9:样条曲线 l10:椭圆 l11:椭圆弧 l12:插入块 l13:创建块 l14:点 l15:图案填充 l16:面域 l17:多行文字"],
  right2: ["m1:删除 m2:复制 m3:镜像 m4:偏移 m5:阵列 m6:移动 m7:旋转 m8:缩放 m9:拉伸 m10:修剪 m11:延伸 m12:打断于点 m13:打断 m14:倒角 m15:圆角 m16:分解"]
};
const separator = '<div class="mx-0.5 my-0.5 h-0.5 border-t border-[#8e8f98] bg-white"></div>';
const grip = '<div class="mx-0.5 mb-px flex h-1.5 flex-col gap-px"><i class="h-[2px] border-b border-[#9a9ba3] bg-white"></i><i class="h-[2px] border-b border-[#9a9ba3] bg-white"></i></div>';
for (const [col, list] of Object.entries(bars)) {
  document.querySelector(`[data-col="${col}"]`).innerHTML = list.map(bar =>
    '<div role="toolbar" class="mb-[3px] flex flex-col border-r border-b border-[#9a9ba3] bg-[#e9eaf0] bg-linear-to-r from-[#f3f4f8] to-[#e2e3ea] pb-1">' + grip +
    bar.split(" ").map(item => {
      if (item === "-") return separator;
      const [id, label] = item.split(":");
      return `<button type="button" aria-label="${label}" title="${label}" class="flex h-[22px] w-full items-center justify-center"><svg class="size-5 shrink-0"><use href="#${id}"/></svg></button>`;
    }).join("") + "</div>").join("");
}
</script>
</body>
</html>
